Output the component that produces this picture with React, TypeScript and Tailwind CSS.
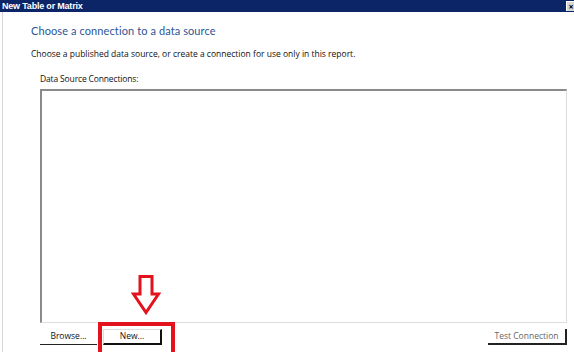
export default function App() {
  return (
    <div className="relative w-[574px] h-[352px] overflow-hidden bg-white font-['Open_Sans','Noto_Sans',sans-serif] text-black">
      {/* title bar */}
      <div className="h-[12px] bg-[#0b2566] flex items-center justify-between pl-[2px]">
        <span className="text-white font-bold text-[9px] leading-none font-['Liberation_Sans',sans-serif] tracking-[-0.2px]">
          New Table or Matrix
        </span>
        <div className="w-[9px] h-[10px] mr-[-1px] bg-[#d8d6d0] border-t border-l border-white flex items-center justify-center text-[9px] leading-none text-black font-bold">
          ×
        </div>
      </div>
      {/* body */}
      <div className="ml-[2px] border-l border-[#d6d6d6] h-[340px] flex flex-col">
        <div className="pl-[28px] pt-[11px]">
          <div className="text-[11px] leading-[16px] text-[#2d5596] font-['Lato',sans-serif] tracking-[0.1px]">
            Choose a connection to a data source
          </div>
          <div className="mt-[9px] text-[8.5px] leading-[12px] text-[#111]">
            Choose a published data source, or create a connection for use only in this report.
          </div>
        </div>
        <div className="pl-[37px] pr-[7px] mt-[13px] flex flex-col">
          <div className="text-[8.5px] leading-[12px] text-[#111] tracking-[-0.15px]">Data Source Connections:</div>
          <div className="mt-[4px] h-[234px] border-t-2 border-l-2 border-t-[#8a8a8a] border-l-[#8a8a8a] border-r border-b border-r-[#dcdcdc] border-b-[#dcdcdc] bg-white" />
          <div className="mt-[6px] flex items-start">
            <div className="w-[57px] h-[16px] border-b border-b-[#222] flex items-center justify-center text-[8.5px] text-[#111]">
              Browse...
            </div>
            <div className="ml-[6px] w-[59px] h-[16px] border-t border-l border-t-[#ddd] border-l-[#ddd] border-b-2 border-r-2 border-b-[#111] border-r-[#111] flex items-center justify-center text-[8.5px] text-[#111]">
              New...
            </div>
            <div className="ml-auto w-[79px] h-[16px] border-b-2 border-r-2 border-b-[#222] border-r-[#222] flex items-center justify-center text-[8.5px] text-[#666]">
              Test Connection
            </div>
          </div>
        </div>
      </div>
      {/* annotations */}
      <div className="absolute left-[98px] top-[322px] w-[77px] h-[34px] border-[4px] border-[#e3121d]" />
      <svg className="absolute left-[131px] top-[274px]" width="30" height="41" viewBox="0 0 30 41">
        <path
          d="M9 2.5 H21 V20 H27.5 L15 38.5 L2.5 20 H9 Z"
          fill="white"
          stroke="#e3121d"
          strokeWidth="3"
          strokeLinejoin="miter"
        />
      </svg>
    </div>
  );
}
